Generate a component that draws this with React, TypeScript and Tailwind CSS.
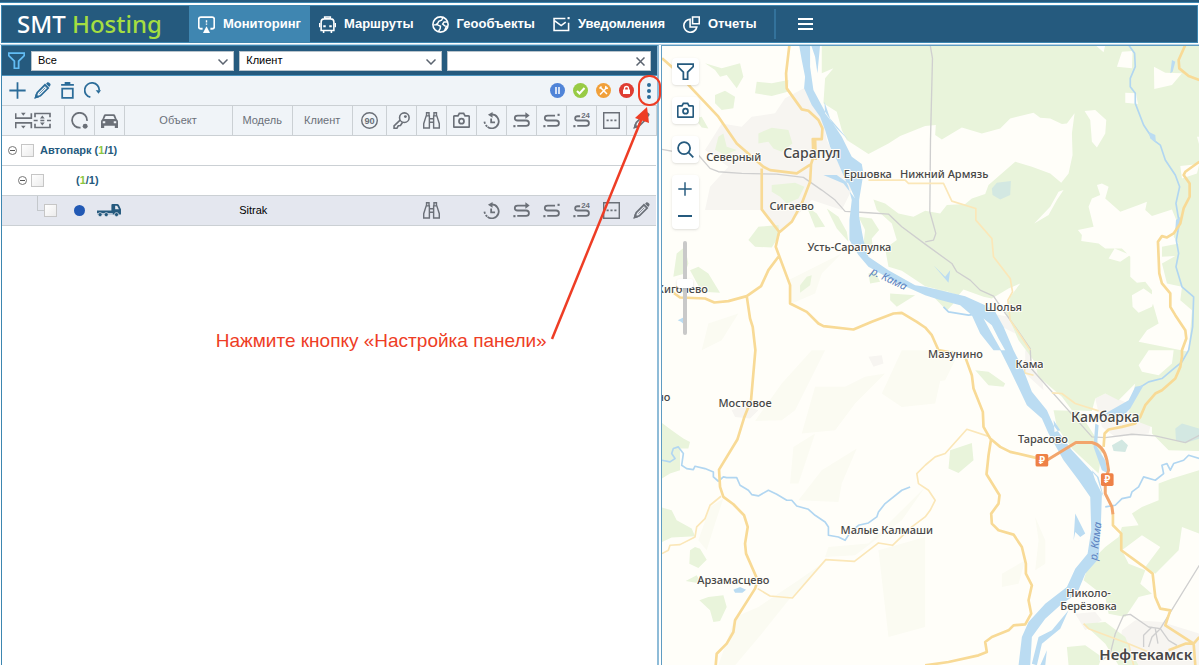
import { useState, type ReactNode } from "react";

type IconProps = { className?: string };

function Glyph({ className = "", box = "0 0 48 48", children }: IconProps & { box?: string; children: ReactNode }) {
  return (
    <svg viewBox={box} className={`shrink-0 ${className}`} fill="none" stroke="currentColor" strokeWidth={5} aria-hidden>
      {children}
    </svg>
  );
}

const MonitorIcon = (p: IconProps) => (
  <Glyph {...p}>
    <path d="M13 36H8q-6 0-6-6V9q0-6 6-6h32q6 0 6 6v21q0 6-6 6h-5" />
    <path d="M24 12v6m0 3v4" strokeWidth={4} />
    <path d="M24 29l10 19H14z" fill="currentColor" stroke="none" />
  </Glyph>
);

const BusIcon = (p: IconProps) => (
  <Glyph {...p}>
    <path d="M15 8h18q9 0 9 9v24H6V17q0-9 9-9zM16 8V3h16v5M13 41v7M35 41v7" strokeWidth={4.500} />
    <path d="M0 20h4v12H0zM44 20h4v12h-4zM12 26h7v6h-7zM29 26h7v6h-7z" fill="currentColor" stroke="none" />
  </Glyph>
);

const GlobeIcon = (p: IconProps) => (
  <Glyph {...p}>
    <circle cx="24" cy="24" r="21.500" strokeWidth={4.500} />
    <path d="M31 4l-4 8-8 3-3 6-5 3M4 25l12 0 8 4-1 7-5 8M44 17l-10 0-4 6 6 5 5 1-5 11" strokeWidth={4} />
  </Glyph>
);

const MailIcon = (p: IconProps) => (
  <Glyph {...p}>
    <path d="M35 7H3v34h41V19M5 14l18 13 13-10" strokeWidth={4.500} />
    <path d="M41 3h6v6h-6z" fill="currentColor" stroke="none" />
  </Glyph>
);

const ReportIcon = (p: IconProps) => (
  <Glyph {...p}>
    <path d="M27 3h19v19H27z" strokeWidth={4.500} />
    <path d="M20 9A18.500 18.500 0 1 0 39 31H20z" strokeWidth={4.500} />
  </Glyph>
);

const FunnelIcon = (p: IconProps) => (
  <Glyph {...p}>
    <path d="M2 3h44v7L30 26v20H18V26L2 10z" />
  </Glyph>
);

const PlusIcon = (p: IconProps) => (
  <Glyph {...p}>
    <path d="M24 1v46M1 24h46" />
  </Glyph>
);

const PencilIcon = (p: IconProps) => (
  <Glyph {...p}>
    <path d="M5 43l4-13L31 8l9 9-22 22z" strokeWidth={5} />
    <path d="M15 33L32 16" strokeWidth={2} />
    <path d="M34 5l4-4q3-1 5 1l3 3q2 3 0 5l-3 4zM1 47l4-14 10 10z" fill="currentColor" stroke="none" />
  </Glyph>
);

const TrashIcon = (p: IconProps) => (
  <Glyph {...p}>
    <path d="M6 8h36M9 19h30v26H9z" />
    <path d="M16 0h16v8H16z" fill="currentColor" stroke="none" />
  </Glyph>
);

const ReloadIcon = (p: IconProps) => (
  <Glyph {...p}>
    <path d="M18 43A20.500 20.500 0 1 1 43 24" />
    <path d="M33 23h15l-7 10z" fill="currentColor" stroke="none" />
  </Glyph>
);

const RotateDotIcon = (p: IconProps) => (
  <Glyph {...p}>
    <path d="M27 44A21 21 0 1 1 45 25" />
    <circle cx="40" cy="40" r="7" fill="currentColor" stroke="none" />
  </Glyph>
);

const CarIcon = (p: IconProps) => (
  <Glyph {...p}>
    <path
      d="M12 6h24q3 0 4 3l4 11q4 3 4 7v18h-9v-6H9v6H0V27q0-4 4-7L8 9q1-3 4-3zm1 5L9 20h30l-4-9zM5 26v6h7v-6zm31 0v6h7v-6z"
      fill="currentColor"
      fillRule="evenodd"
      stroke="none"
    />
  </Glyph>
);

const ExpandIcon = (p: IconProps) => (
  <Glyph {...p} box="0 0 108 50">
    <path d="M2 3v15h47V3M2 48V32h47v16" strokeWidth={5} />
    <path d="M60 15V4h45v11M60 35v11h45V35M56 25h12M76 25h12M96 25h12" strokeWidth={5} />
    <path d="M18 2h14l-7 9zM18 41h14l-7 8zM75 19h14l-7-9zM75 31h14l-7 9z" fill="currentColor" stroke="none" />
  </Glyph>
);

const SpeedIcon = (p: IconProps) => (
  <Glyph {...p}>
    <circle cx="24" cy="24" r="22" strokeWidth={4} />
    <text x="24" y="33" textAnchor="middle" fontSize="26" fontWeight="700" fill="currentColor" stroke="none">
      90
    </text>
  </Glyph>
);

const KeyIcon = (p: IconProps) => (
  <Glyph {...p}>
    <circle cx="32" cy="16" r="13.500" strokeWidth={4.500} />
    <path d="M20 23L3 39v7h8l4-7 6-1 6-9" strokeWidth={4.500} />
    <circle cx="35" cy="13" r="4" fill="currentColor" stroke="none" />
  </Glyph>
);

const BinocularsIcon = (p: IconProps) => (
  <Glyph {...p}>
    <path d="M9 11h9v34H2V33zM39 11h-9v34h16V33zM10 11V2h7v9M38 11V2h-7v9M18 19h12M18 29h12" strokeWidth={4} />
  </Glyph>
);

const CameraIcon = (p: IconProps) => (
  <Glyph {...p}>
    <path d="M5 11h9l4-7h12l4 7h9q3 0 3 3v26q0 3-3 3H5q-3 0-3-3V14q0-3 3-3z" />
    <circle cx="24" cy="26" r="7" />
  </Glyph>
);

const HistoryIcon = (p: IconProps) => (
  <Glyph {...p}>
    <path d="M25 7a19.500 19.500 0 1 1-12 35" />
    <path d="M12 41A20 20 0 0 1 4 24" strokeDasharray="6 4" />
    <path d="M23 18v11h11" />
    <path d="M14 8L27 0v16z" fill="currentColor" stroke="none" />
  </Glyph>
);

const TRACKS = {
  arrow: "M42 10H13q-8 0-8 7t8 7h24q8 0 8 7.500t-8 7.500H12",
  dot: "M34 10H13q-8 0-8 7t8 7h24q8 0 8 7.500t-8 7.500H12",
  day: "M20 12H13q-7 0-7 6t7 6h24q8 0 8 7.500t-8 7.500H12",
};

function TrackIcon({ className, kind }: IconProps & { kind: keyof typeof TRACKS }) {
  return (
    <Glyph className={className}>
      <path d={TRACKS[kind]} />
      <path d="M1 37h6v6H1z" fill="currentColor" stroke="none" />
      {kind === "arrow" && <path d="M35 1l12 9-12 9z" fill="currentColor" stroke="none" />}
      {kind === "dot" && <path d="M41 5h6v6h-6z" fill="currentColor" stroke="none" />}
      {kind === "day" && (
        <text x="23" y="16" fontSize="22" fontWeight="700" fill="currentColor" stroke="none">
          24
        </text>
      )}
    </Glyph>
  );
}

const DotsBoxIcon = (p: IconProps) => (
  <Glyph {...p}>
    <path d="M2 2h44v44H2z" strokeWidth={4} />
    <path d="M10 21h6v5h-6zM21 21h6v5h-6zM32 21h6v5h-6z" fill="currentColor" stroke="none" />
  </Glyph>
);

const SearchIcon = (p: IconProps) => (
  <Glyph {...p}>
    <circle cx="20" cy="20" r="17" />
    <path d="M33 33l13 13" />
  </Glyph>
);

const TruckIcon = (p: IconProps) => (
  <Glyph {...p} box="0 0 70 38">
    <path
      d="M0 19h42V3q0-3 3-3h14q3 0 5 3l6 12v16H0zM53 5v10h11l-4-8q-1-2-3-2z"
      fill="currentColor"
      fillRule="evenodd"
      stroke="none"
    />
    <path d="M0 27h46v4H0z" fill="#e4e7ef" stroke="none" />
    <g fill="currentColor" stroke="#e4e7ef" strokeWidth={2}>
      <circle cx="9" cy="31" r="6" />
      <circle cx="27" cy="31" r="6" />
      <circle cx="57" cy="31" r="6" />
    </g>
  </Glyph>
);

const NAV = [
  { label: "Мониторинг", Icon: MonitorIcon, active: true },
  { label: "Маршруты", Icon: BusIcon, active: false },
  { label: "Геообъекты", Icon: GlobeIcon, active: false },
  { label: "Уведомления", Icon: MailIcon, active: false },
  { label: "Отчеты", Icon: ReportIcon, active: false },
];

function TopBar() {
  return (
    <header className="mx-px mt-0.5 flex h-[38px] shrink-0 border border-[#3d86b0] bg-[#255a7e] text-white">
      <a href="#" className="flex w-[187px] shrink-0 items-center pl-[15px] font-['Noto_Sans',sans-serif] text-2xl font-medium">
        <span className="whitespace-pre">SMT </span>
        <span className="text-[#a5de41]">Hosting</span>
      </a>
      <nav className="flex">
        {NAV.map(({ label, Icon, active }) => (
          <a
            key={label}
            href="#"
            className={`flex items-center gap-2 px-[9px] text-[13px] font-bold ${active ? "bg-[#3f86b1]" : ""}`}
          >
            <Icon className="size-[17px]" />
            {label}
          </a>
        ))}
      </nav>
      <div className="my-[3px] ml-2 border-l-2 border-[#33729b]" />
      <button type="button" aria-label="Меню" className="ml-[22px] flex flex-col justify-center gap-[3px]">
        <span className="h-0.5 w-[15px] bg-white" />
        <span className="h-0.5 w-[15px] bg-white" />
        <span className="h-0.5 w-[15px] bg-white" />
      </button>
    </header>
  );
}

function FilterSelect({ label, options }: { label: string; options: string[] }) {
  return (
    <div className="relative min-w-0 flex-1">
      <select aria-label={label} className="block h-5 w-full appearance-none border border-[#b9c4cc] bg-white px-1.5 text-[11px] text-black">
        {options.map((o) => (
          <option key={o}>{o}</option>
        ))}
      </select>
      <svg viewBox="0 0 10 6" className="pointer-events-none absolute top-2 right-1.5 h-1.5 w-2.5" fill="none" stroke="#5c6470" strokeWidth={1.500}>
        <path d="M0.500 0.500L5 5l4.500-4.500" />
      </svg>
    </div>
  );
}

function Filters() {
  const [query, setQuery] = useState("");
  return (
    <div className="flex h-[30px] items-center gap-[5px] border-b border-[#4b93bd] bg-[#255a7e] pr-1.5 pl-1.5">
      <FunnelIcon className="mr-px size-[17px] text-[#62bdf5]" />
      <FilterSelect label="Группа" options={["Все"]} />
      <FilterSelect label="Поле поиска" options={["Клиент"]} />
      <div className="relative min-w-0 flex-1">
        <input
          aria-label="Поиск"
          value={query}
          onChange={(e) => setQuery(e.target.value)}
          className="block h-5 w-full border border-[#b9c4cc] bg-white pr-5 pl-1.5 text-[11px] text-black outline-none"
        />
        <button type="button" aria-label="Очистить" onClick={() => setQuery("")} className="absolute top-1.5 right-1.5">
          <svg viewBox="0 0 9 9" className="size-[9px]" stroke="#5c6470" strokeWidth={1.500}>
            <path d="M0.500 0.500l8 8M8.500 0.500l-8 8" />
          </svg>
        </button>
      </div>
    </div>
  );
}

const TOOLS = [
  { label: "Добавить", Icon: PlusIcon },
  { label: "Изменить", Icon: PencilIcon },
  { label: "Удалить", Icon: TrashIcon },
  { label: "Обновить", Icon: ReloadIcon },
];

const STATUSES = [
  {
    label: "Стоит",
    color: "bg-[#5084d8]",
    mark: <path d="M6 4v7M9 4v7" strokeWidth={1.500} />,
  },
  {
    label: "На связи",
    color: "bg-[#98cb45]",
    mark: <path d="M4 8l2.500 2.500L11.500 5" strokeWidth={2} />,
  },
  {
    label: "В ремонте",
    color: "bg-[#f1a03a]",
    mark: <path d="M4 4l7 7M11 4.500L4 11.500M3.500 5.500l2-2M10 3l-.5 2.500 2.500-.5" strokeWidth={1.500} />,
  },
  {
    label: "Заблокирован",
    color: "bg-[#df3d32]",
    mark: (
      <>
        <path d="M5.500 7V5.500a2 2 0 0 1 4 0V7" strokeWidth={1.300} />
        <path d="M4 6.500h7V11H4z" fill="white" stroke="none" />
      </>
    ),
  },
];

function Toolbar() {
  return (
    <div className="flex h-[29px] items-center bg-[#f0f4f8] pl-[7px] text-[#2b6c99]">
      <div className="flex gap-2">
        {TOOLS.map(({ label, Icon }) => (
          <button key={label} type="button" aria-label={label}>
            <Icon className="size-[17px]" />
          </button>
        ))}
      </div>
      <div className="ml-auto flex items-center gap-2">
        {STATUSES.map(({ label, color, mark }) => (
          <button key={label} type="button" aria-label={label} className={`size-[15px] rounded-full ${color}`}>
            <svg viewBox="0 0 15 15" className="size-[15px]" fill="none" stroke="white">
              {mark}
            </svg>
          </button>
        ))}
        <button type="button" aria-label="Настройка панели" className="relative flex w-[15px] flex-col items-center gap-0.5">
          <span className="size-1 rounded-full bg-current" />
          <span className="size-1 rounded-full bg-current" />
          <span className="size-1 rounded-full bg-current" />
          <span className="pointer-events-none absolute -top-2 -left-1 z-20 h-[31px] w-[23px] rounded-[11px] border-2 border-[#ee3d25]" />
        </button>
      </div>
    </div>
  );
}

const COLUMNS: { id: string; width?: string; head: ReactNode; cell?: ReactNode }[] = [
  { id: "tree", width: "w-[62px]", head: <ExpandIcon className="mx-auto h-[17px] w-9" /> },
  {
    id: "state",
    width: "w-[30px]",
    head: <RotateDotIcon className="mx-auto size-[17px]" />,
    cell: <span className="mx-auto block size-[11px] rounded-full bg-[#2259b4]" />,
  },
  {
    id: "kind",
    width: "w-[30px]",
    head: <CarIcon className="mx-auto size-[17px]" />,
    cell: <TruckIcon className="mx-auto h-[13px] w-6 text-[#255a7e]" />,
  },
  { id: "object", head: "Объект" },
  { id: "model", width: "w-[60px]", head: "Модель", cell: <span className="block pl-[7px] text-left text-black">Sitrak</span> },
  { id: "client", width: "w-[60px]", head: "Клиент" },
  { id: "speed", width: "w-[34px]", head: <SpeedIcon className="mx-auto size-[17px]" /> },
  { id: "key", width: "w-[30px]", head: <KeyIcon className="mx-auto size-[17px]" /> },
  ...[
    { id: "watch", icon: <BinocularsIcon className="mx-auto size-[17px]" />, inRow: true },
    { id: "photo", icon: <CameraIcon className="mx-auto size-[17px]" />, inRow: false },
    { id: "history", icon: <HistoryIcon className="mx-auto size-[17px]" />, inRow: true },
    { id: "track", icon: <TrackIcon kind="arrow" className="mx-auto size-[17px]" />, inRow: true },
    { id: "path", icon: <TrackIcon kind="dot" className="mx-auto size-[17px]" />, inRow: true },
    { id: "day", icon: <TrackIcon kind="day" className="mx-auto size-[17px]" />, inRow: true },
    { id: "more", icon: <DotsBoxIcon className="mx-auto size-[17px]" />, inRow: true },
    { id: "edit", icon: <PencilIcon className="mx-auto size-[17px]" />, inRow: true },
  ].map(({ id, icon, inRow }) => ({
    id,
    width: "w-[30px]",
    head: icon,
    cell: inRow ? (
      <button type="button" aria-label={id} className="block w-full">
        {icon}
      </button>
    ) : undefined,
  })),
];

function Check({ label }: { label: string }) {
  return (
    <input
      type="checkbox"
      aria-label={label}
      className="size-[13px] shrink-0 appearance-none border border-[#c6c6c6] bg-linear-to-br from-white to-[#ececec] checked:bg-[#3f86b1]"
    />
  );
}

function Collapse() {
  return (
    <button type="button" aria-label="Свернуть" className="flex size-[9px] items-center justify-center rounded-full border border-[#777]">
      <span className="h-px w-[5px] bg-[#555]" />
    </button>
  );
}

function Count() {
  return (
    <span>
      (<span className="text-[#8cc63f]">1</span>/1)
    </span>
  );
}

function ObjectsTable() {
  return (
    <table className="w-full table-fixed border-collapse text-[11px] text-[#6b7078]">
      <thead>
        <tr className="h-[30px] bg-[#f0f4f8]">
          {COLUMNS.map((c) => (
            <th key={c.id} className={`border-y border-r border-[#cbd0d4] p-0 text-center font-normal ${c.width ?? ""}`}>
              {c.head}
            </th>
          ))}
        </tr>
      </thead>
      <tbody>
        <tr className="h-[30px] border-b border-[#cbd0d4] font-bold text-[#255a7e]">
          <td colSpan={COLUMNS.length} className="p-0">
            <div className="flex items-center gap-1 pl-1.5">
              <Collapse />
              <Check label="Автопарк" />
              <span className="ml-0.5">
                Автопарк <Count />
              </span>
            </div>
          </td>
        </tr>
        <tr className="h-[30px] border-b border-[#cbd0d4] font-bold text-[#255a7e]">
          <td colSpan={COLUMNS.length} className="p-0">
            <div className="flex items-center gap-1 pl-4">
              <Collapse />
              <Check label="Группа" />
              <span className="ml-7">
                <Count />
              </span>
            </div>
          </td>
        </tr>
        <tr className="h-[30px] border-b border-[#cbd0d4] bg-[#e4e7ef]">
          {COLUMNS.map((c) =>
            c.id === "tree" ? (
              <td key={c.id} className="p-0">
                <div className="flex items-center pl-[35px]">
                  <span className="-mt-[15px] h-[15px] w-[7px] border-b border-l border-[#c4c8cc]" />
                  <Check label="Sitrak" />
                </div>
              </td>
            ) : (
              <td key={c.id} className="p-0">
                {c.cell}
              </td>
            ),
          )}
        </tr>
      </tbody>
    </table>
  );
}

function MonitoringPanel() {
  return (
    <section className="relative flex w-[54.9%] flex-col border-t border-r-2 border-l border-[#3d86b0] border-r-[#8fbcd8] bg-white">
      <Filters />
      <Toolbar />
      <ObjectsTable />
      <p className="pointer-events-none mt-[105px] mr-[110px] text-right text-[19px] leading-5 text-[#ee3d25]">
        Нажмите кнопку «Настройка панели»
      </p>
      <svg
        viewBox="0 0 110 235"
        className="pointer-events-none absolute top-[60px] right-0 z-10 h-[235px] w-[110px]"
        fill="none"
        stroke="#ee3d25"
        strokeWidth={2.500}
      >
        <path d="M5 233L95 12" />
        <path d="M100 1L88 12l14 5z" fill="#ee3d25" stroke="none" />
      </svg>
    </section>
  );
}

// Map drawing units are thirds of a pixel.
const FORESTS = [
  "M500 15V100L535 85 510 115 505 190 545 215 560 270 575 300 640 342 700 310 735 288 810 258 842 255 840 285 860 298 920 262 980 280 1035 265 1065 235 1135 218 1155 233 1185 235 1220 252 1235 250 1258 220 1250 280 1252 345 1240 400 1218 428 1185 400 1130 380 1080 365 1000 435 990 462 950 475 930 492 875 495 855 520 810 512 775 530 730 520 690 490 655 478 665 510 710 550 725 600 690 625 700 680 740 692 810 738 860 750 910 765 925 748 985 770 1010 775 1060 745 1095 730 1065 770 1052 815 1090 900 1135 960 1150 1010 1220 1070 1250 1110 1310 1112 1320 1075 1350 1060 1390 1080 1440 1030 1420 1120 1450 1145 1490 1160 1490 1180 1540 1230 1632 1232V15z",
  "M1632 1290L1550 1315 1510 1330 1510 1380 1460 1400 1430 1420 1450 1455 1400 1460 1390 1490 1350 1520 1300 1570 1285 1620 1350 1670 1360 1720 1410 1730 1450 1670 1490 1660 1455 1630 1470 1590 1420 1570 1400 1530 1460 1485 1515 1520 1470 1580 1500 1600 1570 1530 1580 1460 1632 1480z",
  "M150 70L200 85 255 70 265 110 245 145 215 105 195 110 180 90z",
  "M305 125L350 130 400 120 398 155 350 168 300 160z",
  "M180 165L210 152 240 170 235 205 200 210 180 190z",
  "M310 280L350 263 400 270 412 310 380 335 355 325 340 305 310 310z",
  "M350 435L420 428 448 440 430 475 395 490 375 470 350 455z",
  "M280 600L310 560 370 555 375 585 350 622 300 620z",
  "M515 505L550 530 575 575 580 605 545 565z",
  "M455 500L485 520 510 560 480 562z",
  "M610 530L650 535 672 570 650 595 655 640 625 610 630 570z",
  "M435 735L455 710 470 705 465 735 435 758z",
  "M105 690L130 680 160 700 195 758 140 755z",
  "M190 290L205 280 215 320 245 330 210 345 180 330z",
  "M120 235L140 230 160 265 140 262z",
  "M65 640L90 620 100 670 90 700 55 710z",
  "M705 760L780 765 725 800 705 780zM640 700L660 695 675 725 645 730z",
  "M21 1148L50 1170 85 1195 105 1205 100 1225 75 1225 75 1290 45 1300 21 1315z",
  "M21 1402L50 1410 65 1440 110 1465 120 1488 50 1492 21 1505z",
  "M105 1530L120 1520 135 1525 155 1558 130 1583 103 1570z",
  "M133 1680L160 1670 205 1665 215 1700 195 1742 175 1745 165 1710z",
  "M92 1622L125 1605 140 1630z",
  "M885 1230L950 1208 955 1260 910 1298 880 1285z",
  "M960 990L1000 995 1050 1030 1045 1040 1000 1035z",
  "M840 745L880 755 895 790 875 812 840 775z",
  "M1195 1110L1270 1112 1320 1190 1340 1230 1330 1300 1250 1225 1205 1160z",
  "M1235 1820L1290 1815 1340 1850 1330 1875 1240 1875z",
  "M1285 1750L1350 1745 1410 1790 1430 1840 1450 1875H1390L1350 1810z",
];

const CLEARINGS = [
  "M1300 500L1310 475 1335 465 1325 435 1340 430 1360 440 1350 475 1395 515 1450 495 1475 485 1470 510 1490 528 1550 508 1565 545 1555 590 1570 610 1520 620 1520 650 1560 648 1520 670 1535 730 1580 740 1575 780 1610 810 1600 935 1450 905 1475 870 1510 850 1490 780 1490 750 1470 725 1445 728 1425 710 1425 650 1400 625 1350 625 1330 610 1278 603 1280 585 1268 570 1315 560z",
  "M1496 80L1530 98 1580 100 1550 135 1497 147z",
  "M1400 35L1432 33 1430 85 1385 80z",
  "M1410 158L1442 160 1448 192 1410 188z",
  "M1288 213L1320 210 1353 240 1350 280 1325 322 1310 305 1305 240z",
  "M1320 15H1350L1345 37z",
  "M1575 378L1632 372 1625 400 1580 415z",
  "M1137 550L1185 500 1210 455 1225 450 1205 480 1180 525z",
  "M1360 655L1378 625 1425 645 1395 665z",
  "M1430 765L1465 745 1500 770 1490 800 1450 818 1432 800z",
  "M1450 975L1480 930H1555L1550 970 1510 1005 1460 995z",
  "M1625 290H1632V315z",
];

const FIELDS = [
  "M470 930H510L420 1110 380 1140 300 1142 380 1030z",
  "M480 1040L570 1040 630 1010 690 1000 600 1090 540 1170 440 1180z",
  "M740 930H900L860 1000 840 1090 740 1100 680 1060z",
  "M605 1225L560 1330 550 1385 430 1380 500 1290z",
  "M415 1220L480 1180 430 1330 405 1330z",
  "M810 1340L740 1440 600 1545 510 1550 520 1520 640 1510z",
  "M515 1560L430 1620 310 1700 240 1730 190 1875H240L320 1780 400 1680z",
  "M670 1530L810 1490 810 1760 700 1790z",
  "M165 1400L205 1375 180 1450 155 1530 130 1500z",
  "M560 640L500 700 480 760 410 790 400 720z",
  "M250 820L200 900 140 930 160 850z",
  "M810 930L900 960 870 1020 810 1030z",
  "M1140 1430L1170 1500 1170 1570 1140 1590 1150 1500z",
  "M1040 1600L1110 1560 1090 1630 1040 1640z",
];

const URBAN = [
  "M390 175L455 140 500 215 515 300 560 390 590 450 560 510 470 480 380 575 318 510 150 510 165 440 220 380 150 330 200 250 260 260 290 230 360 220z",
  "M1010 820L1060 830 1080 880 1040 860z",
  "M1110 930H1130V980L1160 1010 1165 1050 1110 1000z",
  "M1320 1075L1350 1060 1420 1090 1490 1140 1480 1180 1380 1190 1340 1160z",
  "M230 1110L265 1095 310 1110 285 1135 240 1130z",
  "M1260 1720L1320 1715 1340 1740 1290 1770z",
  "M1400 1770L1440 1740 1520 1745 1632 1780V1875H1440L1390 1840z",
  "M640 950L680 945 685 970 655 980z",
  "M915 20L940 15 935 40 912 55z",
];

const ROADS = [
  "M21 55L55 85 110 145 190 230 245 310 325 380 345 390 425 400 468 372 475 350 473 297 500 297 502 265 490 240 460 212 440 208 395 145 393 100 403 15",
  "M320 385V508L372 575 362 620 405 735 405 790 455 815 490 850 505 858 595 868 650 845 715 820 740 818 785 845 810 862 830 885 850 930",
  "M468 372L465 425 440 490 410 545 372 577",
  "M480 297L482 360",
  "M370 650L340 690 318 738 275 768 220 783 178 787 150 775 75 772 45 750",
  "M275 768L285 835 293 860 301 930 288 1080 268 1130 247 1198 192 1288 195 1340 205 1370 235 1392 267 1425 278 1460 270 1510 273 1540 308 1620 300 1645 240 1740 235 1775 215 1810 185 1840 182 1875",
  "M850 930L925 945M930 950L950 1005 955 1045 983 1115 985 1160 1005 1195 1035 1220 1065 1235 1130 1250 1150 1255",
  "M1008 1195L1000 1245 994 1302 1033 1365 1030 1390 1008 1420 1010 1450 1030 1470 1075 1483 1100 1520 1112 1570 1112 1600 1130 1635 1120 1680 1128 1720 1110 1752 1075 1755 1060 1770 1010 1790 990 1805 995 1835 970 1845 880 1865 810 1875",
  "M1590 15L1570 60 1572 85 1600 108 1632 120",
  "M1632 365L1590 395 1585 405 1603 430 1603 470 1585 505 1575 550 1555 580 1535 592 1520 588 1508 605 1512 700 1520 730 1545 760 1545 800 1560 825 1590 870 1593 895 1580 930 1580 950 1575 980 1560 1015 1520 1050 1500 1060 1470 1095 1455 1130 1440 1150 1400 1160 1360 1168 1348 1180 1345 1220",
  "M1373 1420V1455L1398 1480V1530L1460 1575 1492 1600 1500 1670 1515 1705 1545 1710 1530 1755 1600 1800 1615 1810 1620 1875",
  "M1615 1810L1590 1810 1540 1830M1615 1810L1632 1790",
];

const LANES = [
  "M640 420H750L760 430H865L890 483 962 505V540L1010 595 1015 650 1065 715 1072 755 1058 780 1065 840 1105 900 1125 930",
  "M308 1645L345 1667 412 1673 512 1558 598 1563 670 1508 712 1515 770 1460 810 1430",
  "M198 1368L165 1395 150 1435 125 1460 120 1490 75 1513 45 1515 40 1530 21 1540",
  "M810 1275L840 1250 870 1240 935 1167 1005 1190",
  "M810 1275L785 1300 790 1330 820 1350 840 1380 825 1410 810 1430",
  "M1110 960L1108 998 1135 1005M1190 1058L1220 1060 1260 1090 1330 1112",
  "M1285 1750L1300 1765 1420 1810 1435 1875M1420 1810L1480 1835",
];

const RAILS = [
  "M21 328L60 335 130 345 165 385 190 395 260 400 365 402 445 412 500 450 540 480 570 514 640 518 700 522 740 560 810 612 890 670 905 695 945 720 975 750 1015 768 1040 805 1080 860 1125 925 1128 985 1310 1190 1350 1192 1430 1182 1500 1187 1590 1207 1632 1185",
  "M825 15L832 55 826 300 824 515 842 580 835 600 810 605",
  "M1632 1575L1515 1765 1480 1760 1425 1722 1405 1725 1380 1780 1365 1840 1340 1860M1515 1765L1490 1790 1480 1820M1515 1765L1540 1800 1565 1815M1490 1760L1465 1785 1465 1820M1500 1765L1508 1810",
];

const STREAMS = [
  "M1420 15L1438 40 1440 80 1425 115 1425 140 1440 160 1440 190 1465 255 1495 300 1515 315 1530 360 1560 405 1573 440 1562 490 1572 550 1563 600 1570 640 1562 680 1580 740 1615 770 1612 860 1600 930",
  "M21 1260L45 1265 60 1255 50 1240 55 1225 70 1220 85 1240 80 1275 95 1285 115 1288 120 1278 150 1285 175 1295 175 1310 190 1323 205 1310 215 1312 225 1312 245 1312 255 1335 280 1350 290 1363 310 1367 340 1350 365 1362 395 1380 410 1380 425 1397 460 1407 480 1425 510 1445 520 1460 520 1485 550 1490 570 1500 585 1477 610 1455 640 1448 665 1430 670 1415 690 1390 740 1350 765 1340",
  "M1350 1400L1380 1395 1400 1375 1425 1370 1430 1355 1450 1340 1465 1310 1500 1320 1525 1300 1520 1275 1535 1270 1545 1290 1555 1270 1585 1260 1600 1245 1632 1255",
  "M1600 930L1580 965 1550 990 1520 1015 1480 1025 1440 1050",
  "M865 800L880 815 940 825 980 820",
];

const RIVER =
  "M432 15L440 60 450 110 447 145 470 195 495 230 510 270 525 320 545 360 580 440 590 480 583 540 583 600 610 645 640 680 720 725 810 765 850 778 915 795 950 825 975 880 1015 930 1035 930 1065 990 1115 1095 1160 1135 1180 1180 1225 1260 1270 1320 1305 1370 1308 1470 1297 1540 1260 1585 1235 1640 1170 1690 1120 1745 1100 1790 1090 1875H1125L1130 1790 1170 1735 1220 1690 1265 1660 1290 1600 1330 1555 1337 1450 1340 1360 1325 1310 1250 1230 1195 1155 1175 1110 1130 1055 1105 990 1075 930 1045 860 1020 815 990 795 930 768 810 740 780 735 700 690 640 650 625 600 612 530 612 480 625 400 620 372 590 350 560 290 540 260 510 215 475 150 465 80V15z";

const BACKWATERS = [
  "M468 15L480 50 487 100 495 15z",
  "M508 185L525 235 580 300 545 265 510 220z",
  "M505 405L545 405 580 430 600 475 565 430z",
  "M1255 1500L1260 1420 1290 1480 1275 1490 1260 1475z",
  "M1195 1140L1215 1170 1198 1175z",
  "M1350 1120L1420 1080 1440 1040 1465 1035 1425 1105 1400 1130 1360 1140z",
  "M1320 1150L1330 1155 1325 1220 1350 1260 1358 1300 1340 1290 1315 1220z",
  "M1310 1290L1330 1310 1345 1370 1320 1320z",
  "M1130 1870L1150 1790 1190 1770 1240 1710 1215 1765 1160 1810 1145 1875z",
  "M1155 1875L1175 1830 1170 1875z",
  "M835 675L870 710 885 690 880 728z",
  "M1545 100L1550 60 1560 65 1552 95zM1480 275L1500 285 1502 308 1485 295zM1562 540L1575 530 1570 575 1560 570z",
  "M235 1648L255 1640 273 1648 262 1657 240 1657z",
  "M68 840L85 832 90 855 78 845z",
];

// Dry islands between the two channels below Шолья.
const ISLANDS = "M985 835L1010 855 1030 895 1050 930H1038L1015 890z";

const PLACES = [
  { name: "Северный", x: 236, y: 362 },
  { name: "Сигаево", x: 410, y: 511 },
  { name: "Ершовка", x: 638, y: 415 },
  { name: "Нижний Армязь", x: 867, y: 415 },
  { name: "Усть-Сарапулка", x: 583, y: 633 },
  { name: "Кигбаево", x: 82, y: 759 },
  { name: "Шолья", x: 1045, y: 812 },
  { name: "Мазунино", x: 901, y: 952 },
  { name: "Кама", x: 1123, y: 984 },
  { name: "но", x: 26, y: 1083 },
  { name: "Мостовое", x: 270, y: 1101 },
  { name: "Тарасово", x: 1163, y: 1207 },
  { name: "Малые Калмаши", x: 695, y: 1480 },
  { name: "Арзамасцево", x: 235, y: 1631 },
  { name: "Николо-", x: 1300, y: 1671 },
  { name: "Берёзовка", x: 1300, y: 1710 },
];

function TollSign({ x, y }: { x: number; y: number }) {
  return (
    <g>
      <rect x={x - 19} y={y - 19} width="38" height="38" rx="5" fill="#ee8147" />
      <text x={x} y={y + 11} textAnchor="middle" fontSize="30" fontWeight="700" fill="white">
        ₽
      </text>
    </g>
  );
}

function MapCanvas() {
  return (
    <svg
      viewBox="21 18 1611 1857"
      preserveAspectRatio="xMinYMin slice"
      className="absolute inset-0 size-full font-['Noto_Sans',sans-serif]"
      fill="none"
      strokeLinejoin="round"
    >
      <path d={FIELDS.join("")} fill="#fbfbf2" />
      <path d={URBAN.join("")} fill="#f7f5f1" />
      <path d={FORESTS.join("")} fill="#e9f4db" />
      <path d={CLEARINGS.join("")} fill="#fffef9" />
      <path d="M1010 445L1025 428 1067 423 1065 465 1035 478 1012 465zM1560 1165L1580 1150 1632 1165V1195L1590 1208 1562 1200zM1370 1215L1400 1198 1418 1215 1410 1235 1375 1232z" fill="#d3e8e2" />
      <path d={RAILS.join("")} stroke="#cfcfcf" strokeWidth={4} />
      <path d={STREAMS.join("")} stroke="#b1d6f1" strokeWidth={5} />
      <path d={LANES.join("")} stroke="#fbe7b8" strokeWidth={5} />
      <path d={RIVER + BACKWATERS.join("")} fill="#bbdcf2" />
      <path d={ISLANDS} fill="#fffef9" />
      <path d={ROADS.join("")} stroke="#f8da96" strokeWidth={8} />
      <path d="M1175 1260L1262 1207H1310Q1345 1215 1355 1260L1360 1290 1350 1320V1360L1370 1400 1373 1422" stroke="#f2a56c" strokeWidth={9} />
      <TollSign x={1160} y={1260} />
      <TollSign x={1356} y={1318} />
      <g fill="#474747" stroke="#fffef9" strokeWidth={6} paintOrder="stroke" textAnchor="middle" fontWeight="500">
        {PLACES.map((p) => (
          <text key={p.name} x={p.x} y={p.y} fontSize="33">
            {p.name}
          </text>
        ))}
        <text x="470" y="353" fontSize="42">
          Сарапул
        </text>
        <text x="1350" y="1145" fontSize="42">
          Камбарка
        </text>
        <text x="1472" y="1860" fontSize="45" fontWeight="600">
          Нефтекамск
        </text>
      </g>
      <g fill="#5b82c0" fontSize="33" fontStyle="italic" textAnchor="middle">
        <text transform="translate(697 726) rotate(25)">р. Кама</text>
        <text transform="translate(1332 1504) rotate(-83)">р. Кама</text>
      </g>
    </svg>
  );
}

function MapView() {
  const [zoom, setZoom] = useState(45);
  return (
    <section className="relative ml-0.5 min-w-0 flex-1 overflow-hidden border-t border-l border-[#5f9cc2] bg-[#fffef9]">
      <MapCanvas />
      <div className="absolute top-3 left-2.5 flex flex-col items-center gap-3 text-[#255a7e]">
        {[
          { label: "Фильтр", Icon: FunnelIcon },
          { label: "Снимок", Icon: CameraIcon },
          { label: "Найти", Icon: SearchIcon },
        ].map(({ label, Icon }) => (
          <button key={label} type="button" aria-label={label} className="flex size-[27px] items-center justify-center rounded-sm bg-white shadow-sm">
            <Icon className="size-[17px]" />
          </button>
        ))}
        <div className="flex flex-col rounded-sm bg-white shadow-sm">
          <button type="button" aria-label="Приблизить" onClick={() => setZoom((z) => Math.max(0, z - 5))} className="flex size-[27px] items-center justify-center">
            <PlusIcon className="size-3.5" />
          </button>
          <button type="button" aria-label="Отдалить" onClick={() => setZoom((z) => Math.min(100, z + 5))} className="flex size-[27px] items-center justify-center">
            <span className="h-0.5 w-3.5 bg-current" />
          </button>
        </div>
        <input
          type="range"
          aria-label="Масштаб"
          min={0}
          max={100}
          value={zoom}
          onChange={(e) => setZoom(Number(e.target.value))}
          className="h-[94px] w-4 appearance-none bg-transparent [writing-mode:vertical-lr] [&::-webkit-slider-runnable-track]:w-1 [&::-webkit-slider-runnable-track]:rounded-full [&::-webkit-slider-runnable-track]:bg-[#c9c9c9] [&::-webkit-slider-thumb]:-ml-1.5 [&::-webkit-slider-thumb]:h-[9px] [&::-webkit-slider-thumb]:w-4 [&::-webkit-slider-thumb]:appearance-none [&::-webkit-slider-thumb]:rounded-xs [&::-webkit-slider-thumb]:bg-white [&::-webkit-slider-thumb]:shadow-sm"
        />
      </div>
    </section>
  );
}

export default function App() {
  return (
    <div className="flex min-h-screen flex-col bg-white font-['Liberation_Sans',Arial,sans-serif]">
      <div className="h-[3px] shrink-0 border-b border-[#3d86b0] bg-[#255a7e]" />
      <TopBar />
      <div className="mt-px h-px shrink-0 bg-[#b5d3e6]" />
      <main className="flex flex-1 pl-px">
        <MonitoringPanel />
        <MapView />
      </main>
    </div>
  );
}
